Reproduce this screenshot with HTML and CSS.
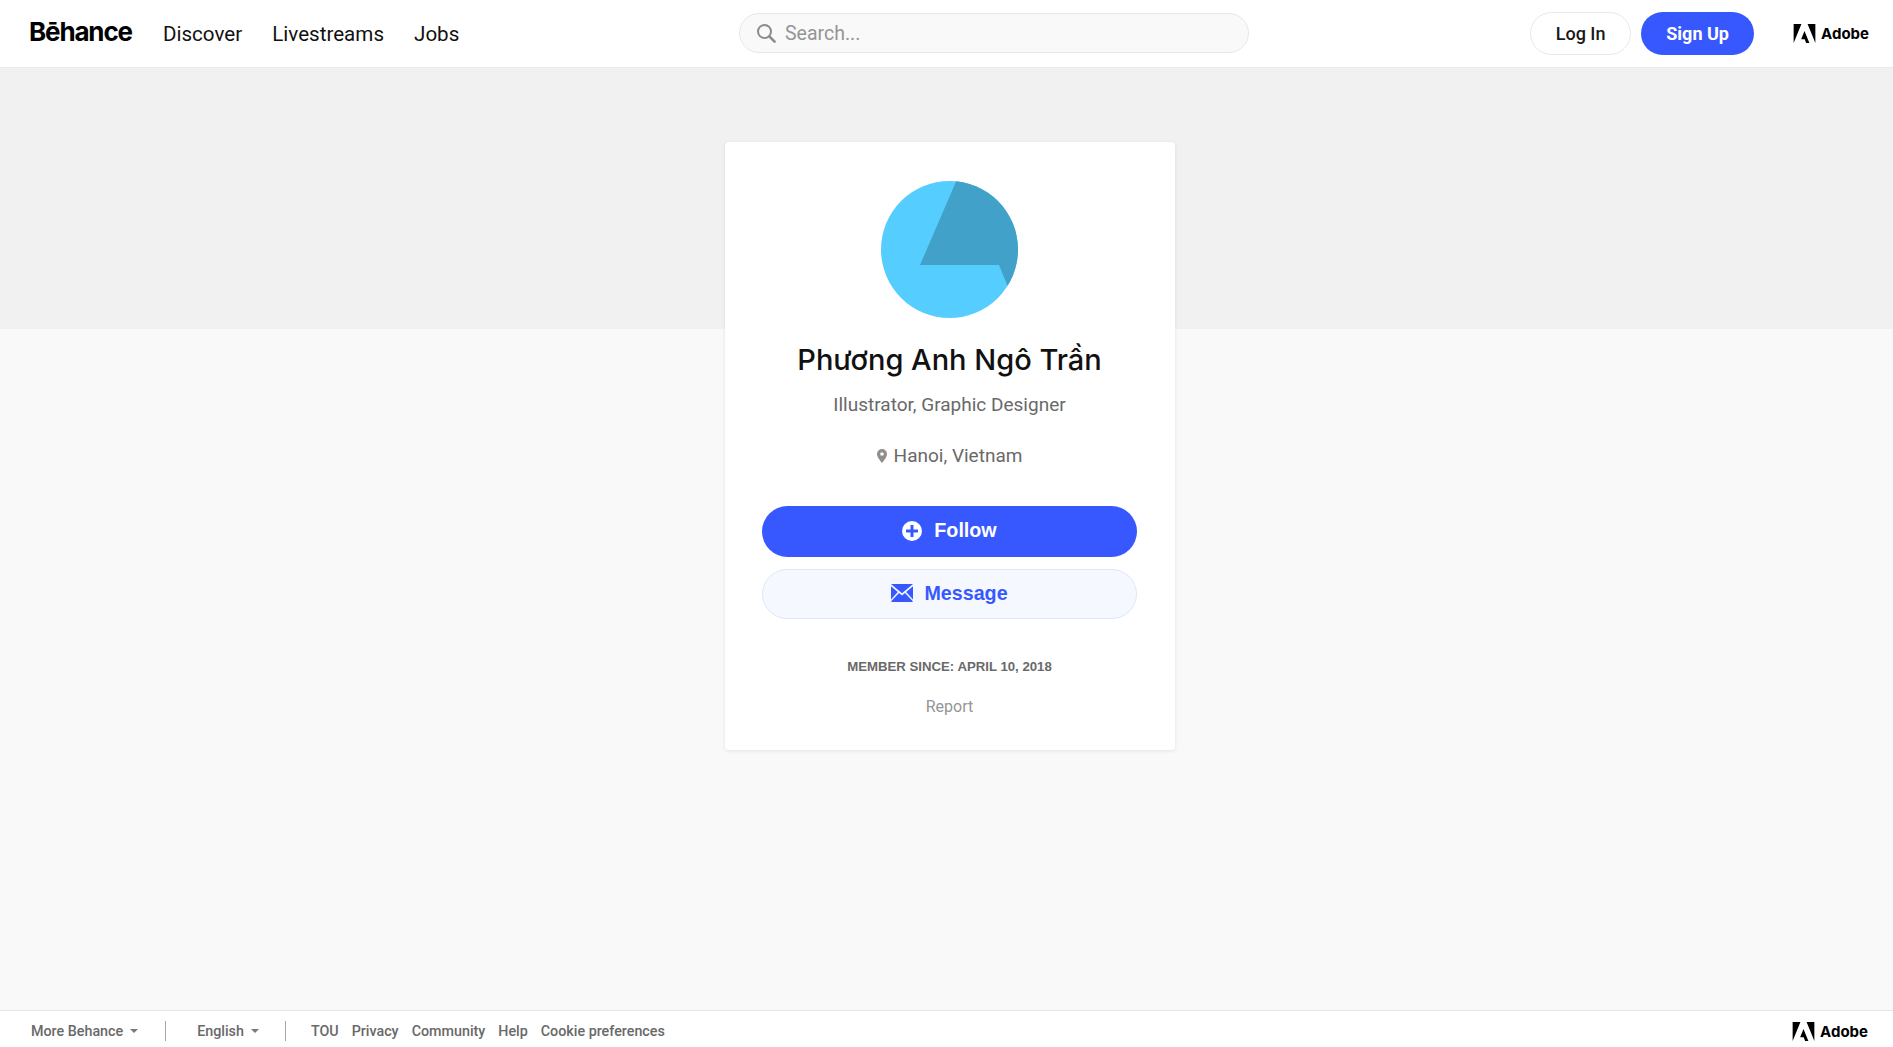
FILE: index.html
```html
<!DOCTYPE html>
<html lang="en">
<head>
<meta charset="utf-8">
<title>Phương Anh Ngô Trần on Behance</title>
<link rel="stylesheet" href="styles.css">
</head>
<body>
<div class="page">
  <header class="topbar">
    <div class="left">
      <a class="logo">Bēhance</a>
      <nav class="nav"><a>Discover</a><a>Livestreams</a><a>Jobs</a></nav>
    </div>
    <div class="search">
      <svg class="search-icon" viewBox="0 0 20 20"><circle cx="8.5" cy="8.5" r="6.5" fill="none" stroke="#8a8a8a" stroke-width="2"/><path d="M13.3 13.3 18.6 18.6" stroke="#8a8a8a" stroke-width="2.6" stroke-linecap="round"/></svg>
      <span class="search-text">Search...</span>
    </div>
    <div class="right">
      <a class="btn login">Log In</a>
      <a class="btn signup">Sign Up</a>
      <a class="adobe">
        <svg class="adobe-mark" viewBox="0 0 24 21"><path d="M0 0h8.600L0 21zM24 0h-8.600L24 21zM12 7.700 17.400 21h-3.600l-1.600-4.200H8.300z" fill="#000"/></svg>
        <span>Adobe</span>
      </a>
    </div>
  </header>
  <main class="main">
    <div class="hero"></div>
    <section class="card">
      <svg class="avatar" viewBox="0 0 137 137">
        <defs><clipPath id="disc"><circle cx="68.500" cy="68.500" r="68.500"/></clipPath></defs>
        <circle cx="68.500" cy="68.500" r="68.500" fill="#55ceff"/>
        <path clip-path="url(#disc)" d="M77 -4 39 84h79l9 22L150 106V-4z" fill="#41a1c9"/>
      </svg>
      <h1 class="name">Phương Anh Ngô Trần</h1>
      <p class="role">Illustrator, Graphic Designer</p>
      <p class="location">
        <svg class="pin" viewBox="0 0 10 14"><path fill-rule="evenodd" d="M5 0a5 5 0 0 1 5 5c0 3-3 6.500-5 9-2-2.500-5-6-5-9a5 5 0 0 1 5-5zm0 3.200a1.800 1.800 0 1 0 0 3.600 1.800 1.800 0 0 0 0-3.600z" fill="#8f8f8f"/></svg>
        <span>Hanoi, Vietnam</span>
      </p>
      <a class="action follow">
        <svg class="plus" viewBox="0 0 20 20"><path fill-rule="evenodd" d="M10 0a10 10 0 1 1 0 20 10 10 0 0 1 0-20zM8.500 4v4.500H4v3h4.500V16h3v-4.500H16v-3h-4.500V4z" fill="#fff"/></svg>
        <span>Follow</span>
      </a>
      <a class="action message">
        <svg class="mail" viewBox="0 0 22 18"><path d="M0 0h22L11 9.200zM0 2.200v13.300l6.800-7.600zM22 2.200v13.300l-6.800-7.600zM8 9l3 2.500L14 9l7.600 8.100V18H.4v-.9z" fill="#3858ff"/></svg>
        <span>Message</span>
      </a>
      <p class="since">MEMBER SINCE: APRIL 10, 2018</p>
      <a class="report">Report</a>
    </section>
  </main>
  <footer class="footer">
    <div class="foot-left">
      <a class="menu more">More Behance<i class="caret"></i></a>
      <a class="menu lang">English<i class="caret"></i></a>
      <div class="links"><a>TOU</a><a>Privacy</a><a>Community</a><a>Help</a><a>Cookie preferences</a></div>
    </div>
    <a class="adobe foot-adobe">
      <svg class="adobe-mark" viewBox="0 0 24 21"><path d="M0 0h8.600L0 21zM24 0h-8.600L24 21zM12 7.700 17.400 21h-3.600l-1.600-4.200H8.300z" fill="#000"/></svg>
      <span>Adobe</span>
    </a>
  </footer>
</div>
</body>
</html>
```
FILE: styles.css
```css
* { box-sizing: border-box; }
html, body { margin: 0; height: 100%; }
body { font-family: "Liberation Sans", Arial, sans-serif; background: #f9f9f9; color: #191919; overflow: hidden; }
a { color: inherit; text-decoration: none; }
p, h1 { margin: 0; }
.page { height: 1047px; display: flex; flex-direction: column; }

.topbar { height: 68px; flex: none; background: #fff; border-bottom: 1px solid #ebebeb; display: grid; grid-template-columns: 710px 510px 1fr; align-items: center; padding: 0 24px 0 29px; position: relative; z-index: 2; }
.left { display: flex; align-items: center; }
.logo { font-family: "Inter", sans-serif; font-weight: 700; font-size: 26px; letter-spacing: -1.15px; color: #000; margin-right: 31px; position: relative; top: -2px; }
.nav { display: flex; gap: 30px; font-family: "Roboto", sans-serif; font-size: 20.6px; font-weight: 400; color: #111; }
.search { height: 40px; margin-bottom: 2px; border: 1px solid #e8e8e8; border-radius: 20px; background: #f9f9f9; display: flex; align-items: center; padding-left: 16px; font-family: "Roboto", sans-serif; font-size: 19.5px; color: #959595; }
.search-icon { width: 20px; height: 20px; margin-right: 9px; }
.search-text { padding-top: 2px; }
.right { display: flex; align-items: center; justify-content: flex-end; }
.btn { height: 43px; border-radius: 22px; display: flex; align-items: center; justify-content: center; font-family: "Roboto", sans-serif; font-size: 18px; }
.login { width: 101px; border: 1px solid #e8e8e8; font-weight: 500; margin-right: 10px; }
.signup { width: 113px; background: #3858ff; color: #fff; font-weight: 700; margin-right: 39px; }
.adobe { display: flex; align-items: center; gap: 5px; font-family: "Inter", sans-serif; font-weight: 700; font-size: 15px; color: #000; }
.adobe-mark { width: 23px; height: 19px; }

.main { flex: 1; position: relative; display: flex; justify-content: center; align-items: flex-start; padding-top: 74px; }
.hero { position: absolute; left: 0; right: 0; top: 0; height: 261px; background: #f1f1f1; }
.card { position: relative; width: 450px; height: 608px; margin-left: 7px; background: #fff; border-radius: 4px; box-shadow: 0 1px 4px rgba(0,0,0,.09); display: flex; flex-direction: column; align-items: center; padding: 39px 38px 0 37px; }
.avatar { width: 137px; height: 137px; flex: none; }
.name { font-family: "Inter", sans-serif; font-weight: 500; font-size: 29px; line-height: 36px; margin-top: 24px; color: #111; white-space: nowrap; }
.role { font-family: "Roboto", sans-serif; font-size: 19px; line-height: 24px; margin-top: 15px; color: #696969; }
.location { font-family: "Roboto", sans-serif; font-size: 19px; line-height: 24px; margin-top: 27px; color: #696969; display: flex; align-items: center; gap: 7px; }
.pin { width: 10px; height: 14px; }
.action { width: 375px; border-radius: 26px; display: flex; align-items: center; justify-content: center; font-family: "Liberation Sans", Arial, sans-serif; font-weight: 700; font-size: 19.7px; flex: none; padding-bottom: 2px; }
.follow { height: 51px; margin-top: 38px; background: #3858ff; color: #fff; gap: 12px; }
.plus { width: 20px; height: 20px; }
.message { height: 50px; margin-top: 12px; background: #f5f8ff; border: 1px solid #dfe6fb; color: #3858ff; gap: 11px; }
.mail { width: 22px; height: 18px; }
.since { font-family: "Liberation Sans", Arial, sans-serif; font-weight: 700; font-size: 13.2px; line-height: 18px; margin-top: 39px; color: #696969; }
.report { font-family: "Roboto", sans-serif; font-size: 16px; line-height: 20px; margin-top: 21px; color: #959595; }

.footer { height: 37px; flex: none; background: #fff; border-top: 1px solid #e6e6e6; display: flex; align-items: center; justify-content: space-between; padding: 4px 25px 0 31px; font-family: "Roboto", sans-serif; font-size: 14.3px; font-weight: 500; color: #696969; }
.foot-left { display: flex; align-items: center; height: 100%; }
.menu { display: flex; align-items: center; height: 20px; margin-top: -1px; }
.caret { width: 0; height: 0; margin-left: 7px; border: 4px solid transparent; border-top-color: #7a7a7a; border-bottom: 0; }
.more { padding-right: 27px; border-right: 1px solid #a8a8a8; margin-right: 31px; }
.lang { padding-right: 26px; border-right: 1px solid #a8a8a8; margin-right: 25px; }
.links { display: flex; gap: 13px; }
.foot-adobe { font-size: 15px; }
```
